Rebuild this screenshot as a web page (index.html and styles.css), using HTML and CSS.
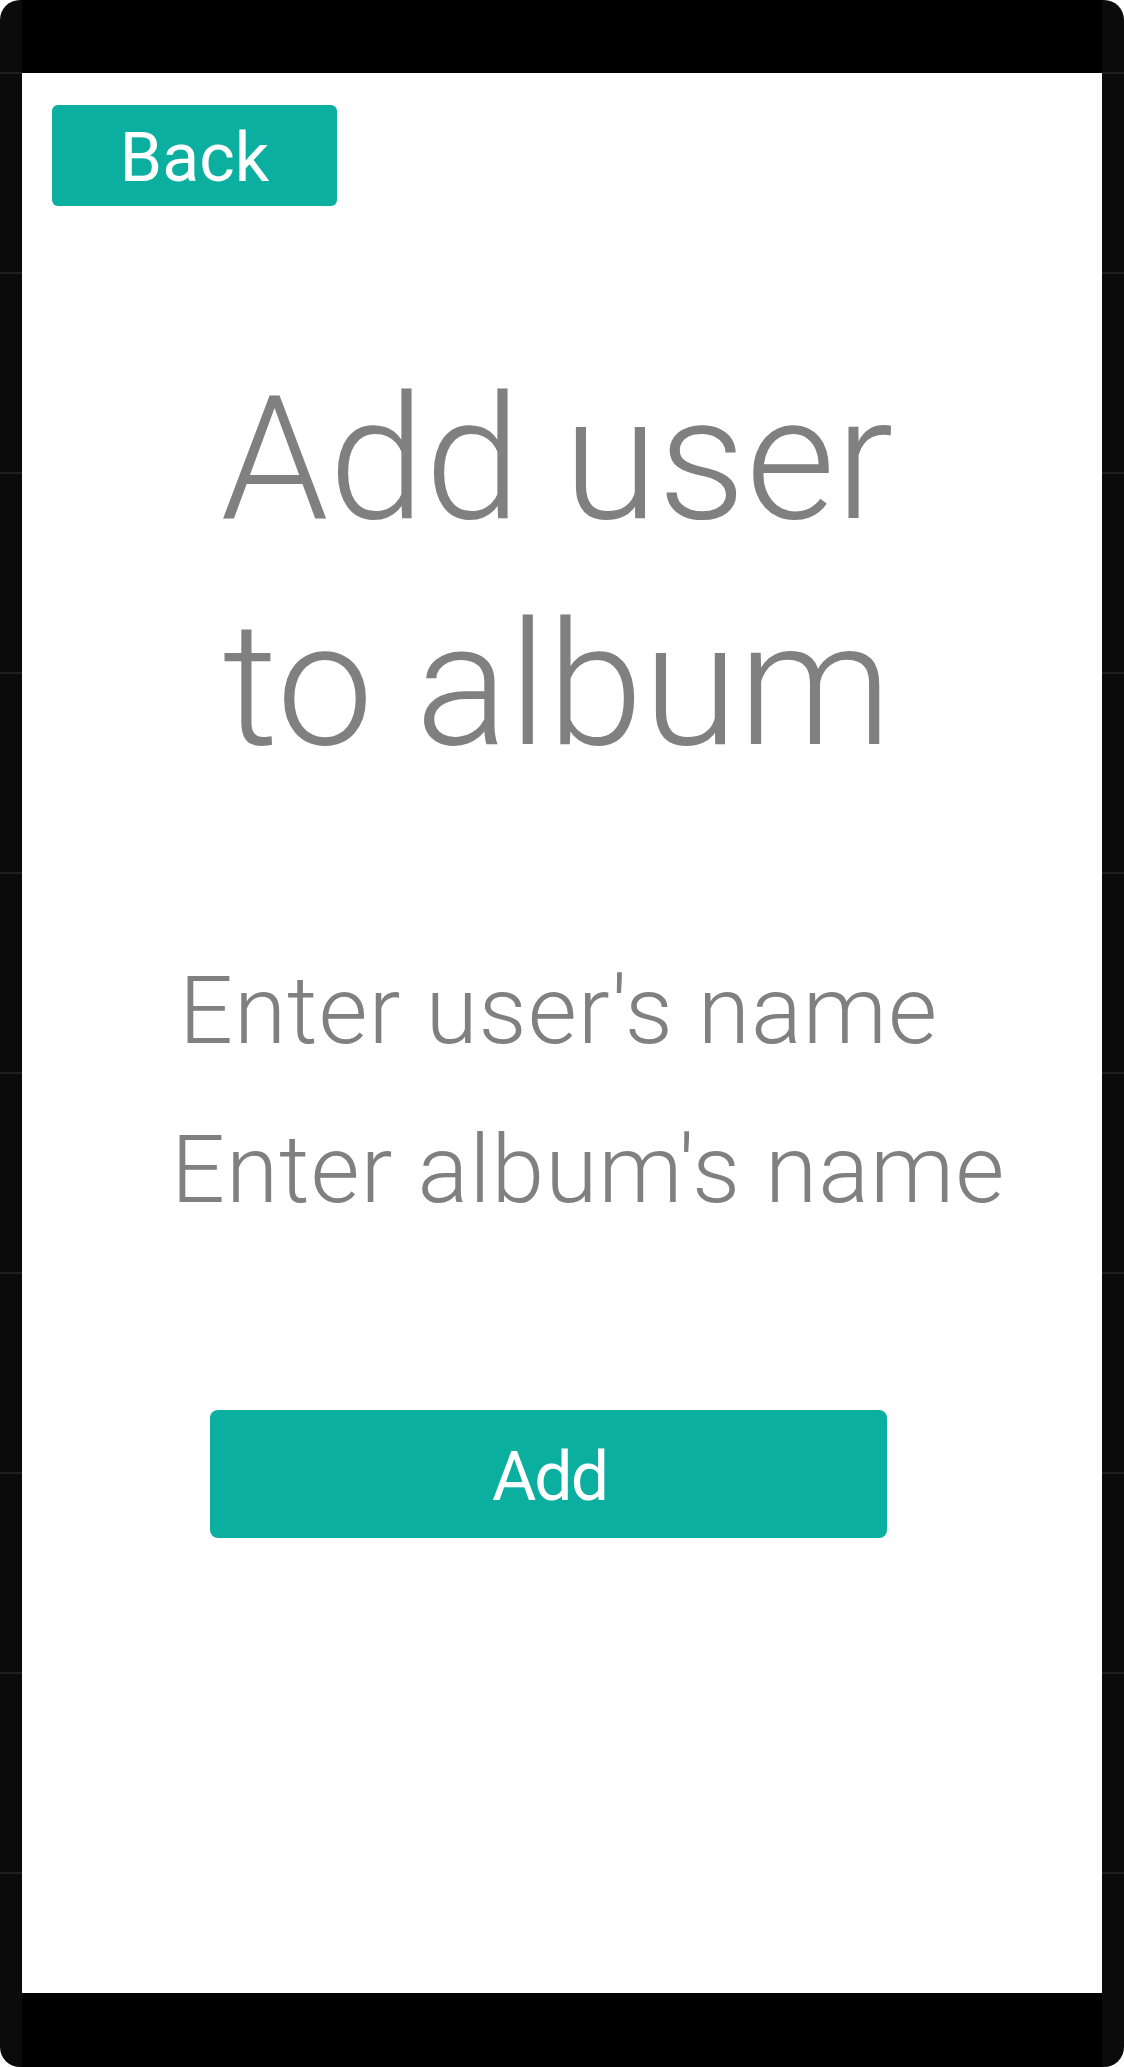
FILE: index.html
```html
<!DOCTYPE html>
<html lang="en">
<head>
<meta charset="utf-8">
<title>Add user to album</title>
<link rel="stylesheet" href="styles.css">
</head>
<body>
<div class="device">
  <div class="statusbar"></div>
  <main class="screen">
    <button class="btn back-btn" type="button">Back</button>
    <h1 class="title">Add user<br>to album</h1>
    <form class="form">
      <input class="field field-user" type="text" placeholder="Enter user's name">
      <input class="field field-album" type="text" placeholder="Enter album's name">
      <button class="btn add-btn" type="button">Add</button>
    </form>
  </main>
  <div class="navbar"></div>
</div>
</body>
</html>
```
FILE: styles.css
```css
html, body {
  margin: 0;
  padding: 0;
  background: #ffffff;
}

.device {
  width: 1124px;
  height: 2067px;
  box-sizing: border-box;
  padding: 0 22px;
  border-radius: 20px;
  overflow: hidden;
  display: flex;
  flex-direction: column;
  background-color: #0b0b0b;
  background-image: repeating-linear-gradient(to bottom, #0b0b0b 0px, #0b0b0b 198px, #1f1f1f 198px, #1f1f1f 200px);
  background-position: 0 -126px;
}

.statusbar {
  height: 73px;
  background: #000000;
  flex: none;
}

.navbar {
  height: 74px;
  background: #000000;
  flex: none;
}

.screen {
  flex: 1;
  background: #ffffff;
  display: flex;
  flex-direction: column;
  font-family: Roboto, "Noto Sans", sans-serif;
}

.btn {
  border: none;
  background: #0aaf9f;
  color: #ffffff;
  font-family: Roboto, "Noto Sans", sans-serif;
  font-weight: 400;
  font-size: 68px;
  padding: 0;
  display: flex;
  align-items: center;
  justify-content: center;
  cursor: pointer;
}

.back-btn {
  margin: 32px 0 0 30px;
  width: 285px;
  height: 101px;
  padding-top: 4px;
  border-radius: 6px;
}

.title {
  margin: 140px 10px 0 0;
  font-size: 173px;
  font-weight: 300;
  line-height: 226px;
  color: #808080;
  text-align: center;
}

.form {
  margin: 133px 0 0 0;
  display: flex;
  flex-direction: column;
}

.field {
  border: none;
  outline: none;
  background: transparent;
  padding: 0;
  height: 159px;
  width: 920px;
  font-family: Roboto, "Noto Sans", sans-serif;
  font-weight: 300;
  font-size: 95px;
  letter-spacing: 0.9px;
  color: #808080;
}

.field::placeholder {
  color: #808080;
  opacity: 1;
}

.field-user {
  margin-left: 157px;
}

.field-album {
  margin-left: 149px;
}

.add-btn {
  margin: 161px 0 0 188px;
  width: 677px;
  height: 128px;
  padding-top: 6px;
  padding-left: 2px;
  letter-spacing: -2px;
  border-radius: 8px;
}
```
